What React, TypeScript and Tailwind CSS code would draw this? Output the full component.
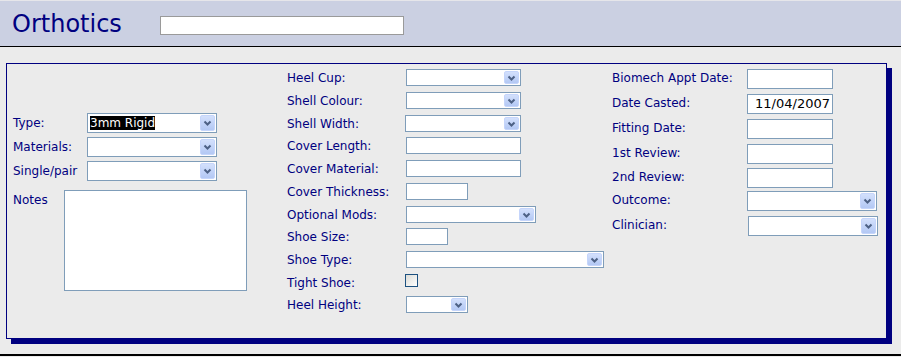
import React from 'react';

const font = "font-['DejaVu_Sans',Verdana,sans-serif]";

function Arrow() {
  return (
    <span className="m-[1px] ml-0 flex w-[15px] items-center justify-center rounded-[2px] border border-[#c5d5fb] bg-gradient-to-b from-[#d3e0fc] to-[#b3c8f4]">
      <svg width="9" height="6" viewBox="0 0 9 6">
        <path d="M1.5 1.5 L4.5 4.5 L7.5 1.5" fill="none" stroke="#4d6185" strokeWidth="2" />
      </svg>
    </span>
  );
}

function Select({ size, value }: { size: string; value?: string }) {
  return (
    <div className={`flex border border-[#7f9db9] bg-white ${size}`}>
      <div className="flex flex-1 items-center pl-[2px] text-[12px] text-white">
        {value && <span className="bg-black leading-[14px]">{value}</span>}
      </div>
      <Arrow />
    </div>
  );
}

function Input({ size, value }: { size: string; value?: string }) {
  return (
    <div className={`flex items-center justify-end border border-[#7f9db9] bg-white pr-[2px] text-[13px] text-black ${size}`}>
      {value}
    </div>
  );
}

const middle = [
  { label: 'Heel Cup:', h: 'h-[23px]', ctl: <Select size="w-[115px] h-[17px]" /> },
  { label: 'Shell Colour:', h: 'h-[23px]', ctl: <Select size="w-[115px] h-[17px]" /> },
  { label: 'Shell Width:', h: 'h-[22px]', ctl: <Select size="w-[116px] h-[17px] -ml-[1px]" /> },
  { label: 'Cover Length:', h: 'h-[23px]', ctl: <Input size="w-[115px] h-[17px]" /> },
  { label: 'Cover Material:', h: 'h-[23px]', ctl: <Input size="w-[115px] h-[17px]" /> },
  { label: 'Cover Thickness:', h: 'h-[23px]', ctl: <Input size="w-[62px] h-[17px]" /> },
  { label: 'Optional Mods:', h: 'h-[22px]', ctl: <Select size="w-[130px] h-[17px]" /> },
  { label: 'Shoe Size:', h: 'h-[23px]', ctl: <Input size="w-[42px] h-[17px]" /> },
  { label: 'Shoe Type:', h: 'h-[23px]', ctl: <Select size="w-[198px] h-[17px]" /> },
  {
    label: 'Tight Shoe:',
    h: 'h-[22px]',
    ctl: <div className="-ml-[1px] h-[13px] w-[13px] border border-[#1c5180] bg-gradient-to-br from-[#dcdcd7] to-white" />,
  },
  { label: 'Heel Height:', h: 'h-[23px]', ctl: <Select size="w-[62px] h-[17px]" /> },
];

const right = [
  { label: 'Biomech Appt Date:', h: 'h-[25px]', ctl: <Input size="w-[86px] h-[20px]" /> },
  { label: 'Date Casted:', h: 'h-[25px]', ctl: <Input size="w-[86px] h-[20px]" value="11/04/2007" /> },
  { label: 'Fitting Date:', h: 'h-[25px]', ctl: <Input size="w-[86px] h-[20px]" /> },
  { label: '1st Review:', h: 'h-[24px]', ctl: <Input size="w-[86px] h-[20px]" /> },
  { label: '2nd Review:', h: 'h-[23px]', ctl: <Input size="w-[86px] h-[20px]" /> },
  { label: 'Outcome:', h: 'h-[25px]', ctl: <Select size="w-[130px] h-[20px]" /> },
  { label: 'Clinician:', h: 'h-[25px]', ctl: <Select size="w-[130px] h-[20px] ml-[1px]" /> },
];

export default function App() {
  return (
    <div className={`h-[357px] w-[901px] overflow-hidden bg-[#ebebeb] ${font}`}>
      {/* Header */}
      <div className="flex h-[47px] items-center border-t border-b border-t-[#e6e6ea] border-b-black bg-[#cbd0e2] pl-[12px]">
        <span className="text-[24px] leading-none text-[#000080]">Orthotics</span>
        <div className="ml-[38px] mt-[4px] h-[19px] w-[244px] border border-[#9a9a9a] bg-white" />
      </div>

      {/* Panel */}
      <div className="ml-[6px] mt-[16px] flex h-[276px] w-[881px] border border-[#000080] text-[12px] text-[#000080] shadow-[5px_5px_0_#000080]">
        {/* Left */}
        <div className="w-[280px] pl-[6px] pt-[49px]">
          <div className="flex flex-col gap-[4px]">
            {[
              ['Type:', '3mm Rigid'],
              ['Materials:', ''],
              ['Single/pair', ''],
            ].map(([label, value]) => (
              <div key={label} className="flex items-center">
                <span className="w-[74px]">{label}</span>
                <Select size="w-[130px] h-[20px]" value={value} />
              </div>
            ))}
          </div>
          <div className="mt-[9px] flex">
            <span className="w-[51px] pt-[1px]">Notes</span>
            <div className="h-[101px] w-[183px] border border-[#7f9db9] bg-white" />
          </div>
        </div>

        {/* Middle */}
        <div className="w-[325px] pt-[5px]">
          {middle.map((r) => (
            <div key={r.label} className={`flex items-start ${r.h}`}>
              <span className="flex h-[17px] w-[119px] items-center">{r.label}</span>
              {r.ctl}
            </div>
          ))}
        </div>

        {/* Right */}
        <div className="flex-1 pt-[5px]">
          {right.map((r) => (
            <div key={r.label} className={`flex items-start ${r.h}`}>
              <span className="flex h-[20px] w-[135px] items-center pb-[2px]">{r.label}</span>
              {r.ctl}
            </div>
          ))}
        </div>
      </div>

      <div className="mt-[15px] h-[2px] bg-black" />
    </div>
  );
}
